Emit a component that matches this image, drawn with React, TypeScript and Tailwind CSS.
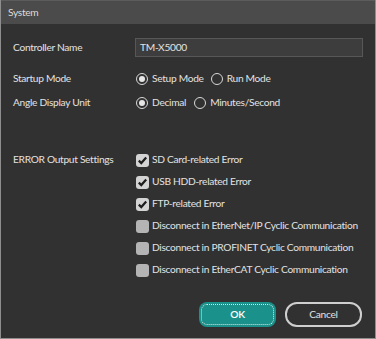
import React from "react";

function Radio({ checked, label }: { checked: boolean; label: string }) {
  return (
    <label className="flex items-center gap-[4px]">
      <span className="w-[12px] h-[12px] rounded-full border border-[#d8d8d8] flex items-center justify-center">
        {checked && <span className="w-[6px] h-[6px] rounded-full bg-[#e6e6e6]" />}
      </span>
      <span>{label}</span>
    </label>
  );
}

function Check({ checked, label }: { checked: boolean; label: string }) {
  return (
    <div className="flex items-center gap-[3px] h-[22px]">
      <span
        className={`w-[13px] h-[13px] rounded-[3px] flex items-center justify-center ${
          checked ? "bg-[#d4d4d4]" : "bg-[#b4b4b4]"
        }`}
      >
        {checked && (
          <svg width="11" height="11" viewBox="0 0 11 11">
            <path d="M1.8 5.6 L4.3 8.1 L9.2 2.6" fill="none" stroke="#1e1e1e" strokeWidth="2.2" />
          </svg>
        )}
      </span>
      <span>{label}</span>
    </div>
  );
}

export default function App() {
  return (
    <div
      className="w-[376px] h-[339px] bg-[#313131] border-l border-r border-b border-[#8e8e8e] text-[#e2e2e2] text-[10.2px] tracking-[-0.3px] whitespace-nowrap flex flex-col"
      style={{ fontFamily: "Lato, 'Noto Sans', sans-serif" }}
    >
      <div className="h-[24px] bg-[#4b4b4b] border-t border-[#5c5c5c] flex items-center pl-[7px] text-[#dcdcdc]">
        System
      </div>

      <div className="flex flex-col pl-[12px] pr-[12px]">
        <div className="flex items-center mt-[14px] h-[19px]">
          <div className="w-[122px]">Controller Name</div>
          <div className="flex-1 h-[19px] bg-[#3d3d3d] border border-[#575757] flex items-center pl-[4px]">
            TM-X5000
          </div>
        </div>

        <div className="flex items-center mt-[13px] h-[18px]">
          <div className="w-[123px]">Startup Mode</div>
          <div className="flex items-center gap-[7px]">
            <Radio checked label="Setup Mode" />
            <Radio checked={false} label="Run Mode" />
          </div>
        </div>

        <div className="flex items-center mt-[6px] h-[18px]">
          <div className="w-[123px]">Angle Display Unit</div>
          <div className="flex items-center gap-[8px]">
            <Radio checked label="Decimal" />
            <Radio checked={false} label="Minutes/Second" />
          </div>
        </div>

        <div className="flex mt-[37px]">
          <div className="w-[123px] h-[22px] flex items-center">ERROR Output Settings</div>
          <div className="flex flex-col">
            <Check checked label="SD Card-related Error" />
            <Check checked label="USB HDD-related Error" />
            <Check checked label="FTP-related Error" />
            <Check checked={false} label="Disconnect in EtherNet/IP Cyclic Communication" />
            <Check checked={false} label="Disconnect in PROFINET Cyclic Communication" />
            <Check checked={false} label="Disconnect in EtherCAT Cyclic Communication" />
          </div>
        </div>

        <div className="flex justify-end gap-[9px] mt-[21px] pr-[1px]">
          <button className="w-[77px] h-[25px] rounded-[8px] bg-[#1a918a] text-white font-semibold p-[2px]">
            <span className="w-full h-full flex items-center justify-center rounded-[6px] border border-dotted border-[#e8e8e8]">
              OK
            </span>
          </button>
          <button className="w-[77px] h-[25px] rounded-[12px] border-2 border-[#cfcfcf] text-[#e2e2e2]">
            Cancel
          </button>
        </div>
      </div>
    </div>
  );
}
